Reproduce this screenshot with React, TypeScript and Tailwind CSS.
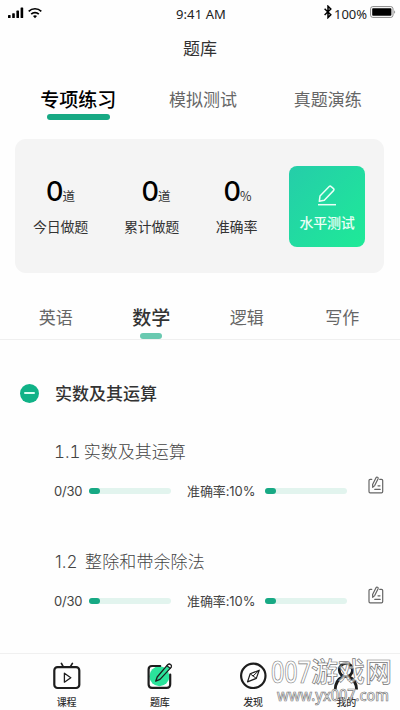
import React, { useState } from 'react';

interface Lesson {
  id: string;
  title: string;
  done: string;
  rate: string;
  titleStyle: string;
}

const examTabs = ['专项练习', '模拟测试', '真题演练'];
const subjects = ['英语', '数学', '逻辑', '写作'];

const stats = [
  { value: '0', unit: '道', label: '今日做题', width: 'w-[91px]', shift: '' },
  { value: '0', unit: '道', label: '累计做题', width: 'w-[91px]', shift: 'pl-[9px]' },
  { value: '0', unit: '%', label: '准确率', width: 'w-[79px]', shift: 'pl-[2px]' },
];

const lessons: Lesson[] = [
  { id: '1', title: '1.1 实数及其运算', done: '0/30', rate: '准确率:10%', titleStyle: 'tabular-nums [word-spacing:-1.5px]' },
  { id: '2', title: '1.2 整除和带余除法', done: '0/30', rate: '准确率:10%', titleStyle: 'pl-px tracking-[0.1px] [word-spacing:3px]' },
];

const StatusBar = () => (
  <div className="flex h-[26px] items-center pl-2 pr-1 text-black">
    <svg className="w-4 h-3" viewBox="0 0 16 12">
      <rect x="0" y="8" width="2.6" height="3" rx="0.6" />
      <rect x="4.2" y="6.2" width="2.6" height="4.8" rx="0.6" />
      <rect x="8.4" y="3.6" width="2.6" height="7.4" rx="0.6" />
      <rect x="12.6" y="0.4" width="2.6" height="10.6" rx="0.6" />
    </svg>
    <svg className="ml-1 w-[14px] h-3" viewBox="0 0 14 12" fill="none" stroke="currentColor" strokeWidth="1.7">
      <path d="M0.7 4.3a9 9 0 0 1 12.6 0" />
      <path d="M3.2 7.1a5.4 5.4 0 0 1 7.6 0" />
      <path d="M5 9.1a2.9 2.9 0 0 1 4 0L7 11.2z" fill="currentColor" stroke="none" />
    </svg>
    <span className="ml-[134px] mt-[3px] w-[52px] whitespace-nowrap font-['Noto_Sans'] text-[13px] leading-none text-[#222] tracking-[0.1px]">9:41 AM</span>
    <svg className="ml-auto w-2 h-[14px] -mt-[2px]" viewBox="0 0 8 14" fill="none" stroke="currentColor" strokeWidth="1.5">
      <path d="M0.6 3.8l6.2 6L4 12.6V1.2l2.8 2.8-6.2 6" />
    </svg>
    <span className="ml-[2px] mt-[3px] w-[33px] whitespace-nowrap font-['Noto_Sans'] text-[13px] leading-none text-[#222]">100%</span>
    <svg className="ml-[3px] w-[26px] h-3 -mt-[2px]" viewBox="0 0 26 12">
      <rect x="0.6" y="0.6" width="22.4" height="10.8" rx="2.2" fill="#fff" stroke="#888" strokeWidth="1" />
      <rect x="2.2" y="2.2" width="19.2" height="7.6" rx="0.8" />
      <path d="M24.2 4.2q2 1.8 0 3.6z" fill="#888" />
    </svg>
  </div>
);

const NoteIcon = () => (
  <svg className="w-4 h-[18px]" viewBox="0 0 16 18" fill="none" stroke="#666" strokeWidth="1.2" strokeLinecap="round" strokeLinejoin="round">
    <path d="M3.8 3.3H2.2Q1 3.3 1 4.5v11q0 1.3 1.2 1.3h11.3q1.2 0 1.2-1.3v-11q0-1.2-1.2-1.2h-1.8" />
    <path d="M4.6 8.6L8 1.7q.5-.9 1.5-.5t.6 1.5L6.7 9.6l-2 1.7z" />
    <path d="M10 9.8h2M6.8 13.4h5.4" />
  </svg>
);

const CourseIcon = () => (
  <svg className="w-7 h-7" viewBox="0 0 28 28" fill="none" stroke="#1d1d1d" strokeLinecap="round" strokeLinejoin="round">
    <rect x="1.3" y="5.2" width="25" height="20.8" rx="3.2" strokeWidth="2.2" />
    <path d="M10.2 4.6L8.4 1.4M17.4 4.6l2-3.2" strokeWidth="1.7" />
    <path d="M11.4 11.2v9l6.4-4.5z" strokeWidth="1.3" />
  </svg>
);

const BankIcon = () => (
  <svg className="w-7 h-7" viewBox="0 0 28 28" fill="none" stroke="#1d1d1d" strokeLinecap="round" strokeLinejoin="round">
    <circle cx="13.4" cy="14.2" r="10" fill="#2be39b" stroke="none" />
    <path d="M14.2 4H6Q2.6 4 2.6 7.4v14.8q0 3.6 3.4 3.6h14.6q3.6 0 3.6-3.6V12.6" strokeWidth="2.2" />
    <path d="M9.7 19.2l1.5-4.2L21.7 2.7q1.6-1.3 3 0t.2 2.9L14 17.4z" fill="#2be39b" strokeWidth="1.3" />
    <path d="M20.9 3.7L24.2 6.3l.9-1.1q1-1.5-.4-2.5t-2.7 0z" fill="#fff" strokeWidth="1.1" />
  </svg>
);

const FindIcon = () => (
  <svg className="w-7 h-7" viewBox="0 0 28 28" fill="none" stroke="#1d1d1d" strokeLinejoin="round">
    <circle cx="14.3" cy="13.8" r="12.2" strokeWidth="2.2" />
    <path d="M20.2 8.2l-2.9 8.2-8.8 3.5 2.7-8.1z" strokeWidth="1.2" />
    <path d="M11.2 11.8l6.1 4.6M13.8 14.2l6.4-6" strokeWidth="1" />
  </svg>
);

const MineIcon = () => (
  <svg className="w-7 h-7" viewBox="0 0 28 28" fill="none" stroke="#1d1d1d" strokeWidth="2.8">
    <circle cx="13.9" cy="8" r="6.6" />
    <path d="M3.2 27.5q.5-9.5 7.4-12.6M24.6 27.5q-.5-9.5-7.4-12.6" />
  </svg>
);

const navItems = [
  { label: '课程', icon: <CourseIcon /> },
  { label: '题库', icon: <BankIcon /> },
  { label: '发现', icon: <FindIcon /> },
  { label: '我的', icon: <MineIcon /> },
];

const Progress = () => (
  <div className="w-[82px] h-[6px] rounded-full bg-[#e2f4ee]">
    <div className="w-[11px] h-[6px] rounded-full bg-[#17a984]" />
  </div>
);

export default function App() {
  const [tab, setTab] = useState(0);
  const [subject, setSubject] = useState(1);
  const [open, setOpen] = useState(true);

  return (
    <div className="relative flex flex-col w-[400px] h-[710px] bg-[#fefefe] font-['Noto_Sans_CJK_SC',sans-serif] text-[#333]">
      <StatusBar />
      <h1 className="h-11 text-center text-[17px] leading-[44px]">题库</h1>

      <div className="mx-4 mr-[10px] grid h-[69px] grid-cols-3 pt-4">
        {examTabs.map((name, i) => (
          <button key={name} onClick={() => setTab(i)} className="flex flex-col items-center">
            <span className={i === tab ? 'text-[19px] leading-[26px] font-medium text-black' : 'text-[17px] leading-[26px] text-[#666]'}>{name}</span>
            {i === tab && <span className="mt-[2px] w-[63px] h-[6px] rounded-full bg-[#17a984]" />}
          </button>
        ))}
      </div>

      {/* Stats card */}
      <div className="ml-[15px] flex w-[369px] h-[134px] items-center rounded-[11px] bg-[#f4f4f4]">
        {stats.map((s) => (
          <div key={s.label} className={`${s.width} -mt-[3px] flex flex-col items-center`}>
            <div className={`${s.shift} flex items-baseline h-9 leading-9`}>
              <span className="font-['Inter'] text-[27px] font-medium text-black tracking-[-2px]">{s.value}</span>
              <span className="ml-px text-[12.5px]">{s.unit}</span>
            </div>
            <span className="mt-[6px] text-[14px] leading-5 tracking-[-0.2px]">{s.label}</span>
          </div>
        ))}
        <button className="ml-[13px] flex w-[76px] h-[81px] flex-col items-center rounded-lg bg-linear-to-br from-[#25cda9] to-[#1eea97] pt-[18px] text-[#eafff7]">
          <svg className="w-5 h-[22px]" viewBox="0 0 20 22" fill="none" stroke="currentColor" strokeWidth="1.5" strokeLinejoin="round">
            <path d="M2.3 17.3l.7-5.2 9.2-9.5q1-1 2 0l2.3 2q1 1 0 2L7.3 16.2z" />
            <path d="M1 20.7h18" />
          </svg>
          <span className="mt-[6px] text-[14px] leading-5 font-medium tracking-[-0.2px]">水平测试</span>
        </button>
      </div>

      <div className="grid h-[67px] grid-cols-4 border-b border-[#efefef] pl-2 pr-[10px] pt-[31px]">
        {subjects.map((name, i) => (
          <button key={name} onClick={() => setSubject(i)} className="flex flex-col items-center">
            <span className={i === subject ? 'text-[19px] leading-[26px] font-medium' : 'text-[17px] leading-[26px] text-[#666]'}>{name}</span>
            {i === subject && <span className="mt-[3px] w-[22px] h-[6px] rounded-full bg-[#69c9b0]" />}
          </button>
        ))}
      </div>

      <div className="h-[313px]">
        <button onClick={() => setOpen(!open)} className="mt-[39px] flex h-7 items-center pl-5">
          <span className="flex w-[19px] h-[19px] items-center justify-center rounded-full bg-[#10b287]">
            <span className="w-[11px] h-[2px] rounded-full bg-[#d9fff3]" />
          </span>
          <span className="ml-4 text-[17px] font-medium">实数及其运算</span>
        </button>

        {open && lessons.map((lesson) => (
          <div key={lesson.id} className="h-[110px] pl-[54px] pt-8 font-['Inter','Noto_Sans_CJK_SC',sans-serif]">
            <div className={`${lesson.titleStyle} text-[17px] leading-[26px] font-light text-[#444]`}>{lesson.title}</div>
            <div className="mt-4 flex h-5 items-center text-[13px] text-[#444]">
              <span className="w-[35px] pt-[2px] tracking-[-0.2px]">{lesson.done}</span>
              <Progress />
              <span className="ml-4 w-[78px] pt-[2px] whitespace-nowrap tracking-[-0.1px]">{lesson.rate}</span>
              <Progress />
              <span className="ml-[21px] -mt-[12px]"><NoteIcon /></span>
            </div>
          </div>
        ))}
      </div>

      <nav className="grid flex-1 grid-cols-4 border-t border-[#f0f0f0] pl-5 pr-[7px] pt-2">
        {navItems.map((item) => (
          <button key={item.label} className="flex flex-col items-center text-[10px] font-medium">
            {item.icon}
            <span className="mt-1 leading-4">{item.label}</span>
          </button>
        ))}
      </nav>

      {/* Site mark over the nav bar */}
      <svg className="pointer-events-none absolute left-[265px] top-[640px] w-[135px] h-[70px] overflow-visible" viewBox="0 -10 135 70" fill="#fff" fillOpacity="0.6" stroke="#777" strokeWidth="0.7">
        <text x="6" y="33" fontSize="30" textLength="40" lengthAdjust="spacingAndGlyphs" fontFamily="'Noto Sans'" fontWeight="500">007</text>
        <text x="46" y="32" fontSize="27" fontFamily="'Noto Sans CJK SC', sans-serif" fontWeight="500">游戏网</text>
        <text x="12" y="51" fontSize="16" textLength="112" lengthAdjust="spacingAndGlyphs" fontFamily="'Noto Sans'" fontWeight="500">www.yx007.com</text>
      </svg>
    </div>
  );
}
